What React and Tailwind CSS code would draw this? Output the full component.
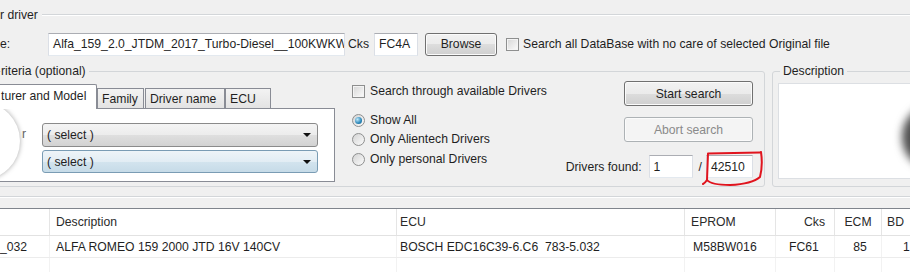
import React from "react";

function Check() {
  return (
    <span className="block w-[13px] h-[13px] shrink-0 border border-[#8e8f8f] bg-linear-to-br from-[#d6d6d6] to-[#fcfcfc] shadow-[inset_0_0_0_1px_#f4f4f4]" />
  );
}

function Radio({ checked }) {
  return (
    <span className="flex w-[13px] h-[13px] shrink-0 items-center justify-center rounded-full border border-[#8e8f8f] bg-linear-to-br from-[#d4d4d4] to-[#fbfbfb]">
      {checked && (
        <span className="block w-[7px] h-[7px] rounded-full bg-[radial-gradient(circle_at_35%_35%,#bfe9fb,#2a86b8_60%,#125c86)]" />
      )}
    </span>
  );
}

function Field({ className = "", children }) {
  return (
    <div
      className={
        "flex items-center h-[23px] bg-white border border-[#abadb3] border-x-[#dbdfe6] border-b-[#e3e9ef] px-[4px] whitespace-nowrap overflow-hidden " +
        className
      }
    >
      {children}
    </div>
  );
}

function Combo({ hover }) {
  return (
    <div
      className={
        "flex items-center justify-between w-[276px] rounded-[3px] border pl-[4px] pr-[6px] " +
        (hover
          ? "h-[23px] border-[#7a9cb4] bg-[linear-gradient(#eef4f8,#e2edf4_50%,#d3e4ee_50%,#c6dbe8)]"
          : "h-[24px] border-[#8a8a8a] bg-[linear-gradient(#f4f4f4,#ececec_50%,#dfdfdf_50%,#d2d2d2)]")
      }
    >
      <span>( select )</span>
      <span className="w-0 h-0 border-x-[4px] border-x-transparent border-t-[4px] border-t-[#111]" />
    </div>
  );
}

const btn =
  "flex items-center justify-center h-[25px] w-[129px] rounded-[3px] border shadow-[inset_0_0_0_1px_#fbfbfb]";

export default function App() {
  return (
    <div className="relative w-[910px] h-[272px] overflow-hidden bg-[#f0f0f0] text-[12.2px] leading-[14px] text-[#1f1f1f] font-['Liberation_Sans',Arial,sans-serif]">
      {/* driver group title */}
      <div className="flex items-center h-[14px] mt-[8px]">
        <span className="pr-[4px]">r driver</span>
        <div className="flex-1 border-t border-[#d3d6d9] border-b border-b-white" />
      </div>

      {/* file row */}
      <div className="flex items-center h-[24px] mt-[10px]">
        <span className="w-[48px]">e:</span>
        <Field className="w-[297px]">Alfa_159_2.0_JTDM_2017_Turbo-Diesel__100KWKW</Field>
        <span className="ml-[3px]">Cks</span>
        <Field className="ml-[5px] w-[44px]">FC4A</Field>
        <button className="ml-[7px] h-[23px] w-[72px] rounded-[3px] border border-[#707070] bg-[linear-gradient(#f2f2f2,#ebebeb_50%,#dddddd_50%,#cfcfcf)] shadow-[inset_0_0_0_1px_#fbfbfb]">
          Browse
        </button>
        <span className="ml-[9px]">
          <Check />
        </span>
        <span className="ml-[4px]">Search all DataBase with no care of selected Original file</span>
      </div>

      {/* criteria + description */}
      <div className="flex mt-[8px]">
        <fieldset className="-ml-[10px] w-[775px] shrink-0 h-[123px] border border-[#d3d6d9] rounded-[3px] pl-[10px] pr-[11px]">
          <legend className="h-[14px] pr-[3px]">riteria (optional)</legend>
          <div className="flex">
            {/* tabs */}
            <div className="-ml-[3px] w-[337px] shrink-0 mt-[7px]">
              <div className="flex items-end h-[23px]">
                <div className="relative z-10 -mb-px h-[25px] w-[99px] bg-white border border-b-0 border-[#898c95] rounded-t-[2px] pl-[2px] pt-[4px] whitespace-nowrap overflow-hidden">
                  turer and Model
                </div>
                <div className="h-[20px] w-[47px] border border-b-0 border-[#898c95] bg-linear-to-b from-[#f3f3f3] to-[#e3e3e3] pl-[4px] flex items-center">
                  Family
                </div>
                <div className="h-[20px] w-[80px] ml-px border border-b-0 border-[#898c95] bg-linear-to-b from-[#f3f3f3] to-[#e3e3e3] pl-[4px] flex items-center">
                  Driver name
                </div>
                <div className="h-[20px] w-[46px] border border-b-0 border-[#898c95] bg-linear-to-b from-[#f3f3f3] to-[#e3e3e3] pl-[4px] flex items-center">
                  ECU
                </div>
              </div>
              <div className="flex h-[74px] bg-white border border-[#898c95] pt-[14px]">
                <div className="w-[43px] shrink-0 text-right pr-[16px] pt-[4px] text-[#666]">r</div>
                <div className="flex flex-col gap-[3px]">
                  <Combo />
                  <Combo hover />
                </div>
              </div>
            </div>

            {/* options */}
            <div className="ml-[17px] flex flex-col">
              <div className="flex items-center gap-[5px] h-[14px] mt-[6px]">
                <Check />
                <span>Search through available Drivers</span>
              </div>
              <div className="flex items-center gap-[5px] h-[16px] mt-[14px]">
                <Radio checked />
                <span>Show All</span>
              </div>
              <div className="flex items-center gap-[5px] h-[16px] mt-[3px]">
                <Radio />
                <span>Only Alientech Drivers</span>
              </div>
              <div className="flex items-center gap-[5px] h-[16px] mt-[4px]">
                <Radio />
                <span>Only personal Drivers</span>
              </div>
            </div>

            {/* search */}
            <div className="flex-1 flex flex-col items-end pt-[3px]">
              <button className={btn + " border-[#707070] bg-[linear-gradient(#f2f2f2,#ebebeb_50%,#dddddd_50%,#cfcfcf)]"}>
                Start search
              </button>
              <button className={btn + " mt-[11px] border-[#adb2b5] bg-[#f4f4f4] text-[#8a8a8a]"}>
                Abort search
              </button>
              <div className="relative flex items-center mt-[13px]">
                <span>Drivers found:</span>
                <Field className="ml-[7px] w-[44px]">1</Field>
                <span className="ml-[6px]">/</span>
                <Field className="ml-[4px] w-[47px]">42510</Field>
                <svg
                  className="absolute -right-[13px] -top-[4px]"
                  width="64"
                  height="36"
                  viewBox="0 0 64 36"
                  fill="none"
                >
                  <path
                    d="M58 1.5 L 6 2.5 L 5 29 Q 3 32 1 33 M 5 29 Q 9 34 28 34 Q 50 33 58 26 Q 61 14 59 1"
                    stroke="#e0141e"
                    strokeWidth="2"
                    strokeLinecap="round"
                    strokeLinejoin="round"
                  />
                </svg>
              </div>
            </div>
          </div>
        </fieldset>

        <fieldset className="ml-[7px] w-[160px] shrink-0 h-[123px] border border-[#d3d6d9] rounded-[3px] pl-[5px]">
          <legend className="h-[14px] ml-[2px] px-[3px]">Description</legend>
          <div className="mt-[5px] h-[96px] bg-white border border-[#dcdfe3]" />
        </fieldset>
      </div>

      {/* group bottom */}
      <div className="mt-[9px] border-t border-[#d3d6d9] border-b border-b-white" />

      {/* results table */}
      <div className="mt-[10px] bg-white border-t border-[#7f848c] whitespace-nowrap">
        <div className="flex h-[27px] items-center border-b border-[#e2e2e2] text-[#2a2a2a]">
          <div className="w-[50px] shrink-0 h-full border-r border-[#e5e5e5]" />
          <div className="w-[347px] shrink-0 h-full flex items-center pl-[6px] border-r border-[#e5e5e5]">Description</div>
          <div className="w-[288px] shrink-0 h-full flex items-center pl-[3px] border-r border-[#e5e5e5]">ECU</div>
          <div className="w-[91px] shrink-0 h-full flex items-center pl-[6px] border-r border-[#e5e5e5]">EPROM</div>
          <div className="w-[59px] shrink-0 h-full flex items-center justify-end pr-[9px] border-r border-[#e5e5e5]">Cks</div>
          <div className="w-[47px] shrink-0 h-full flex items-center justify-center border-r border-[#e5e5e5]">ECM</div>
          <div className="flex-1 h-full flex items-center pl-[5px]">BD</div>
        </div>
        <div className="flex h-[22px] items-center border-b border-[#ececec]">
          <div className="w-[50px] shrink-0 h-full flex items-center border-r border-[#f2f2f2]">_032</div>
          <div className="w-[347px] shrink-0 h-full flex items-center pl-[6px] border-r border-[#f2f2f2]">ALFA ROMEO 159 2000 JTD 16V 140CV</div>
          <div className="w-[288px] shrink-0 h-full flex items-center pl-[3px] border-r border-[#f2f2f2] whitespace-pre">BOSCH EDC16C39-6.C6  783-5.032</div>
          <div className="w-[91px] shrink-0 h-full flex items-center pl-[8px] border-r border-[#f2f2f2]">M58BW016</div>
          <div className="w-[59px] shrink-0 h-full flex items-center justify-center pr-[2px] border-r border-[#f2f2f2]">FC61</div>
          <div className="w-[47px] shrink-0 h-full flex items-center justify-center pl-[4px] border-r border-[#f2f2f2]">85</div>
          <div className="flex-1 h-full flex items-center pl-[21px]">1</div>
        </div>
        <div className="flex h-[22px]">
          <div className="w-[50px] shrink-0 border-r border-[#f2f2f2]" />
          <div className="w-[347px] shrink-0 border-r border-[#f2f2f2]" />
          <div className="w-[288px] shrink-0 border-r border-[#f2f2f2]" />
          <div className="w-[91px] shrink-0 border-r border-[#f2f2f2]" />
          <div className="w-[59px] shrink-0 border-r border-[#f2f2f2]" />
          <div className="w-[47px] shrink-0 border-r border-[#f2f2f2]" />
        </div>
      </div>

      {/* circular overlays at the screen edges */}
      <div className="absolute -left-[58px] top-[102px] w-[78px] h-[78px] rounded-full bg-white shadow-[0_0_5px_rgba(0,0,0,0.35)]" />
      <div className="absolute left-[902px] top-[104px] w-[70px] h-[66px] rounded-full bg-[#4e4e4e] blur-[4px]" />
    </div>
  );
}
